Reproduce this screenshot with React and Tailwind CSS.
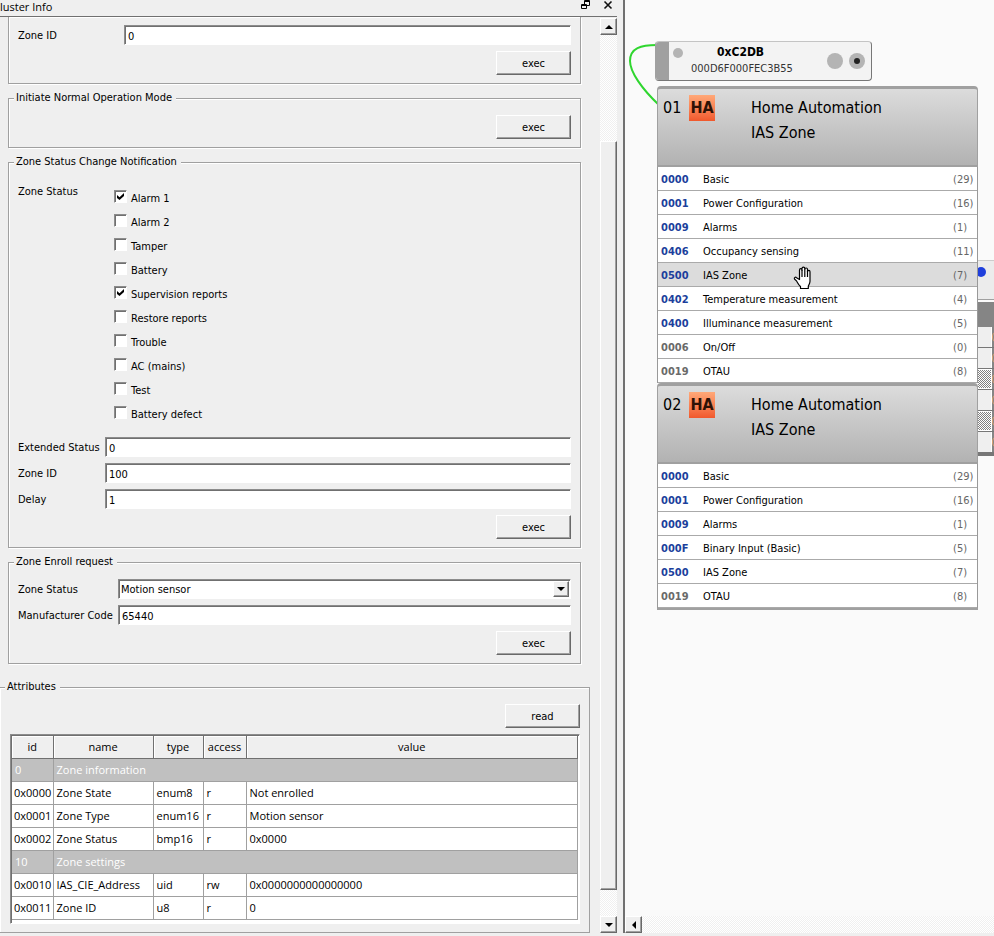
import { useState } from 'react';
import clsx from 'clsx';

const STATUS_FLAGS = [
  { label: 'Alarm 1', checked: true },
  { label: 'Alarm 2', checked: false },
  { label: 'Tamper', checked: false },
  { label: 'Battery', checked: false },
  { label: 'Supervision reports', checked: true },
  { label: 'Restore reports', checked: false },
  { label: 'Trouble', checked: false },
  { label: 'AC (mains)', checked: false },
  { label: 'Test', checked: false },
  { label: 'Battery defect', checked: false },
];

const ATTRIBUTES = [
  { id: '0', name: 'Zone information', section: true },
  { id: '0x0000', name: 'Zone State', type: 'enum8', access: 'r', value: 'Not enrolled' },
  { id: '0x0001', name: 'Zone Type', type: 'enum16', access: 'r', value: 'Motion sensor' },
  { id: '0x0002', name: 'Zone Status', type: 'bmp16', access: 'r', value: '0x0000' },
  { id: '10', name: 'Zone settings', section: true },
  { id: '0x0010', name: 'IAS_CIE_Address', type: 'uid', access: 'rw', value: '0x0000000000000000' },
  { id: '0x0011', name: 'Zone ID', type: 'u8', access: 'r', value: '0' },
];

const ENDPOINTS = [
  {
    id: '01',
    clusters: [
      { id: '0000', name: 'Basic', count: 29, server: true },
      { id: '0001', name: 'Power Configuration', count: 16, server: true },
      { id: '0009', name: 'Alarms', count: 1, server: true },
      { id: '0406', name: 'Occupancy sensing', count: 11, server: true },
      { id: '0500', name: 'IAS Zone', count: 7, server: true, selected: true },
      { id: '0402', name: 'Temperature measurement', count: 4, server: true },
      { id: '0400', name: 'Illuminance measurement', count: 5, server: true },
      { id: '0006', name: 'On/Off', count: 0 },
      { id: '0019', name: 'OTAU', count: 8 },
    ],
  },
  {
    id: '02',
    clusters: [
      { id: '0000', name: 'Basic', count: 29, server: true },
      { id: '0001', name: 'Power Configuration', count: 16, server: true },
      { id: '0009', name: 'Alarms', count: 1, server: true },
      { id: '000F', name: 'Binary Input (Basic)', count: 5, server: true },
      { id: '0500', name: 'IAS Zone', count: 7, server: true },
      { id: '0019', name: 'OTAU', count: 8 },
    ],
  },
];

const RAISED = 'border border-t-white border-l-white border-r-[#696969] border-b-[#696969] bg-[#efefef] shadow-[inset_-1px_-1px_0_#a0a0a0]';
const SUNKEN = 'border border-t-[#8c8c8c] border-l-[#8c8c8c] border-r-white border-b-white bg-white shadow-[inset_1px_1px_0_#707070]';
const TROUGH = 'bg-[repeating-conic-gradient(#fff_0_25%,#f0f0f0_0_50%)] bg-[length:2px_2px]';

const Group = ({ title, className, children }) => (
  <fieldset
    className={clsx(
      'min-w-0 border border-[#a0a0a0] px-[9px] pb-2 shadow-[1px_1px_0_#fff,inset_1px_1px_0_#fff]',
      className,
    )}
  >
    {title && <legend className="-ml-1 bg-[#efefef] pr-1 pl-0.5 leading-[14px]">{title}</legend>}
    {children}
  </fieldset>
);

const PushButton = ({ children }) => (
  <button type="button" className={clsx('mt-1.5 ml-auto block h-6 w-[75px] pt-px text-center', RAISED)}>
    {children}
  </button>
);

const Field = ({ id, label, defaultValue, className }) => (
  <div className={clsx('grid items-center', className)}>
    <label htmlFor={id} className="pt-0.5">{label}</label>
    <input id={id} type="text" defaultValue={defaultValue} className={clsx('h-5 w-full min-w-0 px-[3px] pt-0.5', SUNKEN)} />
  </div>
);

const Flag = ({ label, checked }) => (
  <label className="relative flex h-6 items-start gap-1 pt-[5px]">
    <input
      type="checkbox"
      defaultChecked={checked}
      className={clsx('peer size-[13px] shrink-0 appearance-none', SUNKEN)}
    />
    <svg className="pointer-events-none absolute top-[8px] left-[3px] hidden size-[7px] peer-checked:block" viewBox="0 0 7 7">
      <path d="M0 2v3l2.500 2L7 3V0L2.500 4.300z" fill="#000" />
    </svg>
    <span className="leading-[18px]">{label}</span>
  </label>
);

const Arrow = ({ dir }) => {
  const paths = { up: 'M0 6l4-4 4 4z', down: 'M0 2l4 4 4-4z', left: 'M6 0L2 4l4 4z' };
  return (
    <svg className="size-2" viewBox="0 0 8 8">
      <path d={paths[dir]} fill="#000" />
    </svg>
  );
};

const ScrollButton = ({ dir, label }) => (
  <button type="button" aria-label={label} className={clsx('flex size-[17px] shrink-0 items-center justify-center', RAISED)}>
    <Arrow dir={dir} />
  </button>
);

const AttributeTable = () => (
  <div className={clsx('mt-1.5 ml-px p-px pb-[3px] font-["Open_Sans",sans-serif]', SUNKEN)}>
    <table className="w-full table-fixed border-collapse text-left">
      <thead>
        <tr className="h-[22px] bg-[#efefef]">
          {[
            ['id', 'w-[41px]'],
            ['name', 'w-[100px]'],
            ['type', 'w-[50px]'],
            ['access', 'w-[43px]'],
            ['value', ''],
          ].map(([name, width]) => (
            <th
              key={name}
              className={clsx('border-r border-b border-[#707070] p-0 text-center font-normal shadow-[inset_1px_1px_0_#fff]', width)}
            >
              {name}
            </th>
          ))}
        </tr>
      </thead>
      <tbody>
        {ATTRIBUTES.map(row => row.section ? (
          <tr key={row.id} className="h-[23px] bg-[#c0c0c0] text-white">
            <td className="border-r border-b border-[#a0a0a0] p-0 pl-[3px]">{row.id}</td>
            <td colSpan={4} className="border-r border-b border-[#a0a0a0] p-0 pl-[3px]">{row.name}</td>
          </tr>
        ) : (
          <tr key={row.id} className="h-[23px]">
            <td className="border-r border-b border-[#a0a0a0] p-0 pl-0.5">{row.id}</td>
            <td className="border-r border-b border-[#a0a0a0] p-0 pl-[3px]">{row.name}</td>
            <td className="border-r border-b border-[#a0a0a0] p-0 pl-[3px]">{row.type}</td>
            <td className="border-r border-b border-[#a0a0a0] p-0 pl-[3px]">{row.access}</td>
            <td className="border-r border-b border-[#a0a0a0] p-0 pl-[3px]">{row.value}</td>
          </tr>
        ))}
      </tbody>
    </table>
  </div>
);

const ClusterInfo = () => (
  <section className="flex min-h-0 min-w-0 flex-col pr-1.5">
    <header className="flex h-[17px] shrink-0 items-start justify-between border-b border-[#707070] font-['Open_Sans',sans-serif]">
      <h1 className="text-[11px] leading-[14px]">luster Info</h1>
      <div className="flex gap-3 pr-1">
        <button type="button" aria-label="Float">
          <svg className="size-[10px]" viewBox="0 0 10 10" fill="none" stroke="#000">
            <path d="M3.500 4V.5h5v5H6M3 1.500h6" />
            <path d="M.5 4.500h5v4h-5zM0 5.500h6" />
          </svg>
        </button>
        <button type="button" aria-label="Close">
          <svg className="size-[10px]" viewBox="0 0 10 10" stroke="#111" strokeWidth="1.600">
            <path d="M1.500 1.500l7 7M8.500 1.500l-7 7" />
          </svg>
        </button>
      </div>
    </header>

    <div className="flex min-h-0 flex-1 gap-2.5">
      <div className="min-w-0 flex-1 overflow-hidden">
        <Group className="mr-[9px] ml-2 border-t-0 pt-2">
          <Field id="group-zone-id" label="Zone ID" defaultValue="0" className="grid-cols-[106px_1fr]" />
          <PushButton>exec</PushButton>
        </Group>

        <Group title="Initiate Normal Operation Mode" className="mt-[7px] mr-[9px] ml-2 pt-1">
          <PushButton>exec</PushButton>
        </Group>

        <Group title="Zone Status Change Notification" className="mt-[7px] mr-[9px] ml-2 pt-4">
          <div className="grid grid-cols-[96px_1fr]">
            <span className="leading-[14px]">Zone Status</span>
            <div>
              {STATUS_FLAGS.map(flag => <Flag key={flag.label} {...flag} />)}
            </div>
          </div>
          <div className="mt-3 space-y-1.5">
            <Field id="extended-status" label="Extended Status" defaultValue="0" className="grid-cols-[87px_1fr]" />
            <Field id="status-zone-id" label="Zone ID" defaultValue="100" className="grid-cols-[87px_1fr]" />
            <Field id="delay" label="Delay" defaultValue="1" className="grid-cols-[87px_1fr]" />
          </div>
          <PushButton>exec</PushButton>
        </Group>

        <Group title="Zone Enroll request" className="mt-[7px] mr-[9px] ml-2 pt-2.5">
          <div className="mb-1.5 grid grid-cols-[100px_1fr] items-center">
            <label htmlFor="zone-type" className="pt-0.5">Zone Status</label>
            <div className="relative">
              <select id="zone-type" className={clsx('block h-5 w-full appearance-none px-0.5 pt-0.5', SUNKEN)}>
                <option>Motion sensor</option>
              </select>
              <span className={clsx('pointer-events-none absolute top-0.5 right-0.5 flex size-4 items-center justify-center', RAISED)}>
                <Arrow dir="down" />
              </span>
            </div>
          </div>
          <Field id="manufacturer-code" label="Manufacturer Code" defaultValue="65440" className="grid-cols-[100px_1fr]" />
          <PushButton>exec</PushButton>
        </Group>

        <Group title="Attributes" className="mt-4 border-l-0 pt-1">
          <PushButton>read</PushButton>
          <AttributeTable />
        </Group>
      </div>

      <div className={clsx('mt-px flex w-[17px] shrink-0 flex-col', TROUGH)}>
        <ScrollButton dir="up" label="Scroll up" />
        <div className="flex-[106]" />
        <div className={clsx('flex-[748]', RAISED)} />
        <div className="flex-[26]" />
        <ScrollButton dir="down" label="Scroll down" />
      </div>
    </div>
  </section>
);

const HomeAutomationLogo = () => (
  <span className="flex size-[26px] items-center justify-center bg-linear-to-b from-[#ffa878] to-[#f0582c] text-[16px] leading-none font-bold text-[#2e1206]">
    HA
  </span>
);

const Endpoint = ({ endpoint, selectedKey, onSelect }) => (
  <div>
    <div className="flex h-[81px] rounded-t-sm border-t-3 border-r border-b-2 border-l border-[#a0a0a0] bg-linear-to-b from-[#dcdcdc] to-[#b2b2b2] pt-1.5 pl-[5px] text-[16px] leading-[25px]">
      <span className="w-[26px]">{endpoint.id}</span>
      <HomeAutomationLogo />
      <div className="pl-9">
        <p>Home Automation</p>
        <p>IAS Zone</p>
      </div>
    </div>
    <ul className="border-x border-[#999] bg-white">
      {endpoint.clusters.map(cluster => {
        const key = `${endpoint.id}-${cluster.id}`;
        return (
          <li
            key={key}
            onClick={() => onSelect(key)}
            className={clsx(
              'flex h-6 items-center border-b border-[#aaa] pt-0.5 pr-1 pl-[3px]',
              key === selectedKey && 'bg-[#dcdcdc]',
            )}
          >
            <span className={clsx('w-[42px] font-bold', cluster.server ? 'text-[#1c3f9c]' : 'text-[#6a6a6a]')}>
              {cluster.id}
            </span>
            <span className="flex-1">{cluster.name}</span>
            <span className="w-5 text-[#666]">({cluster.count})</span>
          </li>
        );
      })}
    </ul>
  </div>
);

const DeviceHeader = () => (
  <div className="flex h-10 w-[217px] overflow-hidden rounded-sm border border-t-[#c4c4c4] border-r-[#777] border-b-[#777] border-l-[#a0a0a0] bg-[#f3f3f3]">
    <div className="w-[13px] bg-[#a0a0a0]" />
    <span className="mt-1.5 ml-1 size-2.5 rounded-full bg-[#b4b4b4]" />
    <div className="flex-1 pt-px pl-2">
      <p className="pl-[26px] text-[12px] leading-[18px] font-bold">0xC2DB</p>
      <p className="leading-4 text-[#333]">000D6F000FEC3B55</p>
    </div>
    <div className="flex items-center gap-1.5 pr-1.5">
      <span className="size-4 rounded-full bg-[#b4b4b4]" />
      <span className="flex size-4 items-center justify-center rounded-full bg-[#b4b4b4]">
        <span className="size-1.5 rounded-full bg-[#222]" />
      </span>
    </div>
  </div>
);

// Node that lies partly under the opened device, only its left edge is in view
const HiddenNode = () => (
  <div className="w-20">
    <div className="h-10 border-y border-t-[#ccc] border-b-[#a0a0a0] bg-[#ececec] pt-1.5">
      <span className="-ml-0.5 block size-2.5 rounded-full bg-[#1f3fdc]" />
    </div>
    <div className="mt-0.5 border-b-3 border-[#777] bg-[#858585] pt-[25px]">
      {[false, false, true, false, true, false].map((hatched, i) => (
        <div key={i} className="flex h-[21px] items-center border-b border-[#777]">
          <div
            className={clsx(
              'h-full w-[14px] border-r border-white',
              hatched
                ? 'border-y border-y-white bg-[repeating-conic-gradient(#fff_0_25%,#808080_0_50%)] bg-[length:2px_2px]'
                : 'bg-[#efefef]',
            )}
          />
          <span className="h-2.5 w-2 rounded-full border border-[#d8a070]" />
        </div>
      ))}
    </div>
  </div>
);

const HandCursor = () => (
  <svg className="h-6 w-5" viewBox="0 0 20 24" fill="#fff" stroke="#000" strokeWidth="1.200" strokeLinejoin="round">
    <path d="M6.500 13.500V4.200c0-2 2.500-2 2.500 0V2.700c0-2.200 2.800-2.200 2.800 0v.8c0-2 2.700-2 2.700 0v2.200c0-1.800 2.500-1.800 2.500 0v9.500c0 2-1 3.500-1.700 5v2.300H7.500v-2c-2-1.700-2.700-3.500-3.800-5.300L1.500 13c-.7-1.500 1-2.300 2-1.300z" />
    <path d="M9 4v7M11.800 3.500V11M14.500 5v6" fill="none" />
  </svg>
);

const NodeView = () => {
  const [selectedKey, setSelectedKey] = useState('01-0500');

  return (
    <main className="flex min-w-0 flex-col border-l-2 border-[#707070] bg-[#fafafa]">
      <div className="relative min-h-0 flex-1 overflow-hidden">
        <div className="absolute top-[260px] left-[353px]">
          <HiddenNode />
        </div>
        <svg className="absolute top-10 left-0 h-20 w-10" viewBox="0 0 40 80" fill="none">
          <path d="M32 5C16 5 5 8 5 21c0 11 12 28 29 44" stroke="#2fd62f" strokeWidth="2" />
        </svg>
        <div className="absolute top-[41px] left-[30px]">
          <DeviceHeader />
        </div>
        <div className="absolute top-[86px] left-8 w-[321px] border-b-2 border-[#a0a0a0]">
          {ENDPOINTS.map(endpoint => (
            <Endpoint key={endpoint.id} endpoint={endpoint} selectedKey={selectedKey} onSelect={setSelectedKey} />
          ))}
        </div>
        <div className="pointer-events-none absolute top-[266px] left-[168px]">
          <HandCursor />
        </div>
      </div>
      <div className={clsx('flex shrink-0', TROUGH)}>
        <ScrollButton dir="left" label="Scroll left" />
      </div>
    </main>
  );
};

export default function App() {
  return (
    <div className="grid h-screen grid-cols-[623fr_371fr] grid-rows-[minmax(0,1fr)] overflow-hidden bg-[#efefef] pb-[3px] font-['DejaVu_Sans_Condensed','DejaVu_Sans',sans-serif] text-[11px] leading-[14px] text-black">
      <ClusterInfo />
      <NodeView />
    </div>
  );
}
